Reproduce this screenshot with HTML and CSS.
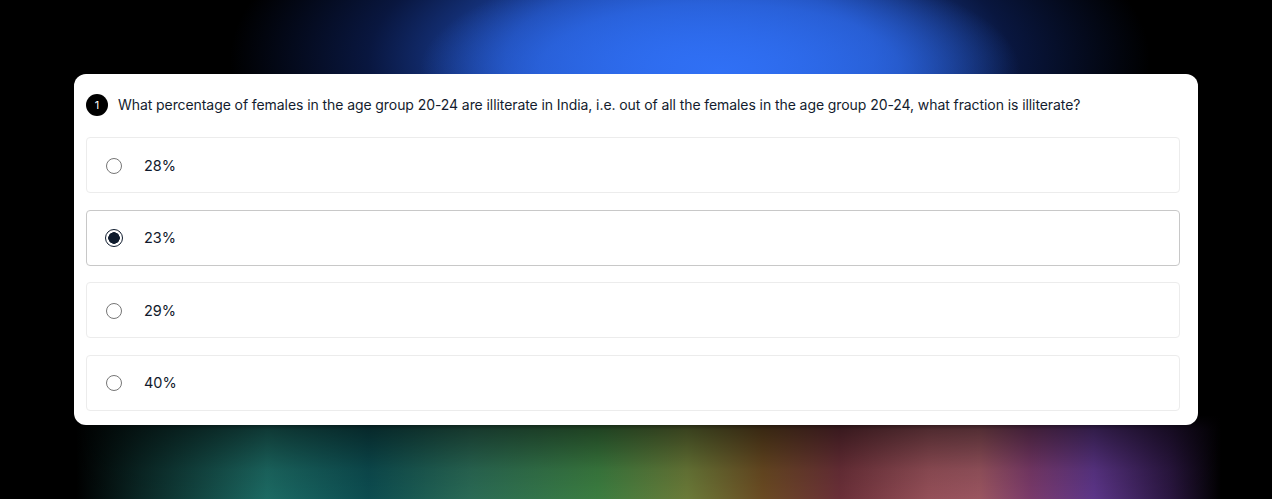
FILE: index.html
```html
<!DOCTYPE html>
<html lang="en">
<head>
<meta charset="utf-8">
<title>Quiz</title>
<link rel="stylesheet" href="styles.css">
</head>
<body>
<div class="stage">
  <div class="card">
    <div class="question">
      <span class="badge">1</span>
      <p class="qtext">What percentage of females in the age group 20-24 are illiterate in India, i.e. out of all the females in the age group 20-24, what fraction is illiterate?</p>
    </div>
    <div class="options">
      <label class="option"><span class="radio"></span><span class="label">28%</span></label>
      <label class="option selected"><span class="radio"></span><span class="label">23%</span></label>
      <label class="option"><span class="radio"></span><span class="label">29%</span></label>
      <label class="option"><span class="radio"></span><span class="label">40%</span></label>
    </div>
  </div>
</div>
</body>
</html>
```

FILE: styles.css
```css
html, body {
  margin: 0;
  height: 499px;
  overflow: hidden;
}
body {
  background-color: #000;
  background-image:
    radial-gradient(ellipse 300px 110px at 720px 70px, rgba(48,112,245,1) 0%, rgba(48,112,245,0.6) 60%, rgba(48,112,245,0) 100%),
    radial-gradient(ellipse 460px 200px at 690px 60px, rgba(40,100,230,0.95) 0%, rgba(35,85,205,0.8) 40%, rgba(20,50,140,0.45) 70%, rgba(0,0,0,0) 100%),
    linear-gradient(to bottom, rgba(0,0,0,1) 0px, rgba(0,0,0,1) 415px, rgba(0,0,0,0.45) 430px, rgba(0,0,0,0.1) 470px, rgba(0,0,0,0) 499px),
    linear-gradient(to right, #000 6%, #0a2624 11%, #1c6a63 21%, #0c4c50 29%, #2a6a55 37%, #3b7d40 47%, #6a7a38 54%, #6a4a22 60%, #6a2f38 66%, #944f58 73%, #9a5560 77%, #7a3a6a 81%, #5c3588 86%, #2a1640 92%, #000 96%);
  font-family: Inter, "Noto Sans", sans-serif;
}
.stage {
  display: flex;
  justify-content: center;
  padding-top: 74px;
}
.card {
  width: 1124px;
  box-sizing: border-box;
  background: #fff;
  border-radius: 12px;
  padding: 20px 18px 14px 12px;
}
.question {
  display: flex;
  align-items: center;
  gap: 10px;
}
.badge {
  flex: none;
  width: 22px;
  height: 22px;
  border-radius: 50%;
  background: #000;
  color: #fff;
  font-size: 11px;
  display: flex;
  align-items: center;
  justify-content: center;
  line-height: 1;
}
.qtext {
  margin: 0;
  font-size: 14px;
  color: #131c2e;
  line-height: 22px;
  letter-spacing: -0.08px;
}
.options {
  display: flex;
  flex-direction: column;
  gap: 16.6px;
  margin-top: 21px;
}
.option {
  display: flex;
  align-items: center;
  height: 56px;
  box-sizing: border-box;
  border: 1px solid #ececec;
  border-radius: 4px;
  padding-left: 19px;
}
.option.selected {
  border-color: #c8c8c8;
}
.radio {
  flex: none;
  width: 16px;
  height: 16px;
  box-sizing: border-box;
  border: 1.5px solid #767676;
  border-radius: 50%;
  margin-right: 22px;
  margin-top: 1px;
}
.selected .radio {
  width: 18px;
  height: 18px;
  margin-left: -1px;
  margin-right: 21px;
  border: 1.5px solid #0f1b2d;
  background: radial-gradient(circle, #0f1b2d 0, #0f1b2d 5.5px, #fff 6px);
}
.label {
  font-size: 14.5px;
  color: #111a2c;
}
```
